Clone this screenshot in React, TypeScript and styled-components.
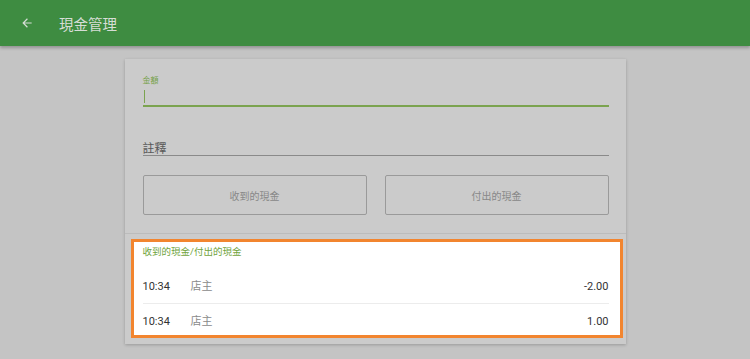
import React from 'react';
import styled, { createGlobalStyle } from 'styled-components';

const GlobalStyle = createGlobalStyle`
  html, body {
    margin: 0;
    padding: 0;
    background: #c4c4c4;
    font-family: Roboto, "Noto Sans CJK TC", sans-serif;
  }
`;

const Page = styled.div`
  width: 750px;
  height: 359px;
  overflow: hidden;
  background: #c4c4c4;
`;

const Toolbar = styled.header`
  height: 46px;
  background: #3e8c41;
  display: flex;
  align-items: center;
  padding-left: 18px;
  box-shadow: 0 2px 3px rgba(0, 0, 0, 0.25);
  position: relative;
`;

const BackButton = styled.button`
  width: 18px;
  height: 18px;
  padding: 0;
  border: none;
  background: none;
  display: flex;
  align-items: center;
  justify-content: center;
  margin-right: 23px;
  cursor: pointer;
`;

const Title = styled.h1`
  margin: 0;
  font-size: 14.5px;
  font-weight: 400;
  color: #d6ddd6;
`;

const Main = styled.main`
  padding-top: 13px;
  display: flex;
  justify-content: center;
`;

const Card = styled.section`
  width: 501px;
  height: 285px;
  background: #cbcbcb;
  box-shadow: 0 1px 3px rgba(0, 0, 0, 0.22);
  display: flex;
  flex-direction: column;
`;

const Form = styled.div`
  padding: 17px 17px 0 18px;
  border-bottom: 1px solid #bcbcbc;
  height: 175px;
  box-sizing: border-box;
  flex: none;
`;

const FieldLabel = styled.div`
  font-size: 8px;
  color: #74a046;
  line-height: 10px;
`;

const AmountInput = styled.div`
  margin-top: 4px;
  height: 15px;
  border-bottom: 2px solid #7ba34f;
  display: flex;
  align-items: flex-start;
`;

const Caret = styled.span`
  width: 1px;
  height: 13px;
  margin-left: 1px;
  background: #7ba34f;
`;

const NoteInput = styled.div`
  margin-top: 32px;
  height: 17px;
  box-sizing: border-box;
  padding-top: 4px;
  border-bottom: 1px solid #8a8a8a;
  font-size: 12px;
  line-height: 13px;
  color: #5a5a5a;
`;

const ButtonRow = styled.div`
  margin-top: 19px;
  display: grid;
  grid-template-columns: 1fr 1fr;
  gap: 18px;
`;

const CashButton = styled.button`
  height: 40px;
  border: 1px solid #9a9a9a;
  border-radius: 2px;
  background: transparent;
  font-family: Roboto, "Noto Sans CJK TC", sans-serif;
  font-size: 10px;
  color: #888;
`;

const ListArea = styled.div`
  flex: 1;
  min-height: 0;
  padding: 5px 3px 6px 6px;
  display: flex;
`;

const Highlight = styled.div`
  flex: 1;
  background: #fff;
  border: 3px solid #f2852f;
  padding: 4px 11px 0 9px;
  display: flex;
  flex-direction: column;
  overflow: hidden;
`;

const ListTitle = styled.div`
  font-size: 9.5px;
  color: #6fa33c;
  line-height: 12px;
`;

const Rows = styled.div`
  margin-top: 13px;
`;

const Row = styled.div<{ $last?: boolean }>`
  display: flex;
  align-items: center;
  flex: none;
  height: ${p => (p.$last ? '35px' : '32px')};
  border-bottom: ${p => (p.$last ? 'none' : '1px solid #ececec')};
  font-size: 11px;
  line-height: 14px;
`;

const Time = styled.span`
  width: 48px;
  color: #333;
`;

const Who = styled.span`
  flex: 1;
  color: #8a8a8a;
`;

const Amount = styled.span`
  color: #333;
`;

const entries = [
  { time: '10:34', who: '店主', amount: '-2.00' },
  { time: '10:34', who: '店主', amount: '1.00' },
];

export default function App() {
  return (
    <Page>
      <GlobalStyle />
      <Toolbar>
        <BackButton aria-label="back">
          <svg width="14" height="14" viewBox="0 0 24 24">
            <path d="M20 11H7.83l5.59-5.59L12 4l-8 8 8 8 1.41-1.41L7.83 13H20v-2z" fill="#d6ddd6" />
          </svg>
        </BackButton>
        <Title>現金管理</Title>
      </Toolbar>
      <Main>
        <Card>
          <Form>
            <FieldLabel>金額</FieldLabel>
            <AmountInput>
              <Caret />
            </AmountInput>
            <NoteInput>註釋</NoteInput>
            <ButtonRow>
              <CashButton>收到的現金</CashButton>
              <CashButton>付出的現金</CashButton>
            </ButtonRow>
          </Form>
          <ListArea>
            <Highlight>
              <ListTitle>收到的現金/付出的現金</ListTitle>
              <Rows>
                {entries.map((e, i) => (
                  <Row key={i} $last={i === entries.length - 1}>
                    <Time>{e.time}</Time>
                    <Who>{e.who}</Who>
                    <Amount>{e.amount}</Amount>
                  </Row>
                ))}
              </Rows>
            </Highlight>
          </ListArea>
        </Card>
      </Main>
    </Page>
  );
}
